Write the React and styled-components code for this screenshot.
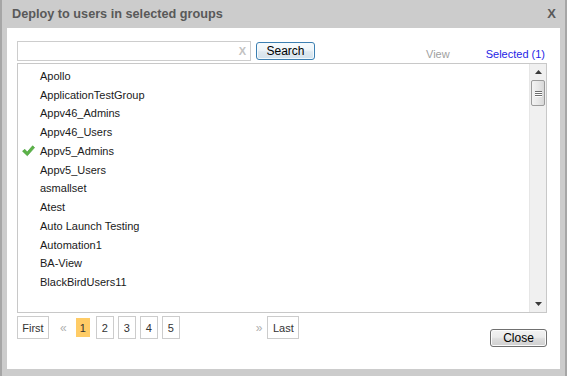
import React from 'react'
import styled, { createGlobalStyle } from 'styled-components'

const groups = [
  'Apollo',
  'ApplicationTestGroup',
  'Appv46_Admins',
  'Appv46_Users',
  'Appv5_Admins',
  'Appv5_Users',
  'asmallset',
  'Atest',
  'Auto Launch Testing',
  'Automation1',
  'BA-View',
  'BlackBirdUsers11',
]

const selected = ['Appv5_Admins']

function CheckMark() {
  return (
    <svg width="13" height="12" viewBox="0 0 13 12">
      <path d="M0.5 6.2 L2.8 4.3 L5.2 7 L10.6 0.8 L12.6 2.6 L5.3 10.8 Z" fill="#5cb247" stroke="#3e9a33" strokeWidth="0.6" strokeLinejoin="round" />
    </svg>
  )
}

function Arrow({ down }) {
  return (
    <svg width="7" height="4" viewBox="0 0 7 4">
      <path d={down ? 'M0 0 H7 L3.5 4 Z' : 'M0 4 H7 L3.5 0 Z'} fill="#3a3a3a" />
    </svg>
  )
}

function App() {
  return (
    <>
      <GlobalStyle />
      <Frame>
        <TitleBar>
          <Title>Deploy to users in selected groups</Title>
          <CloseX>X</CloseX>
        </TitleBar>
        <Body>
          <SearchRow>
            <SearchBox>
              <SearchInput />
              <ClearX>X</ClearX>
            </SearchBox>
            <SearchButton>Search</SearchButton>
            <Tabs>
              <Tab>View</Tab>
              <Tab $active>Selected (1)</Tab>
            </Tabs>
          </SearchRow>

          <ListBox>
            <List>
              {groups.map((g) => (
                <Row key={g}>
                  <CheckCell>{selected.includes(g) ? <CheckMark /> : null}</CheckCell>
                  <RowText>{g}</RowText>
                </Row>
              ))}
            </List>
            <ScrollBar>
              <ScrollArrow><Arrow /></ScrollArrow>
              <Track>
                <Thumb>
                  <Grip />
                  <Grip />
                  <Grip />
                </Thumb>
              </Track>
              <ScrollArrow><Arrow down /></ScrollArrow>
            </ScrollBar>
          </ListBox>

          <Footer>
            <Pager>
              <PageButton $wide>First</PageButton>
              <PageArrow>«</PageArrow>
              <Pages>
                {[1, 2, 3, 4, 5].map((n) => (
                  <PageButton key={n} $active={n === 1}>{n}</PageButton>
                ))}
              </Pages>
              <PageArrow $far>»</PageArrow>
              <PageButton $wide>Last</PageButton>
            </Pager>
            <CloseButton>Close</CloseButton>
          </Footer>
        </Body>
      </Frame>
    </>
  )
}

const GlobalStyle = createGlobalStyle`
  html, body {
    margin: 0;
    padding: 0;
    background: #cccccc;
  }
  * {
    box-sizing: border-box;
  }
`;

let Frame = styled.div`
  width: 567px;
  height: 376px;
  background: #cccccc;
  border-left: 2px solid #a6a6a6;
  border-right: 2px solid #a6a6a6;
  padding: 0 5px 7px 5px;
  display: flex;
  flex-direction: column;
  font-family: "Liberation Sans", Arial, sans-serif;
`;

let TitleBar = styled.div`
  height: 28px;
  display: flex;
  align-items: center;
  justify-content: space-between;
  padding: 0 4px 1px 5px;
  color: #595959;
  font-weight: 700;
`;

let Title = styled.div`
  font-size: 12.7px;
`;

let CloseX = styled.div`
  font-size: 13px;
`;

let Body = styled.div`
  flex: 1;
  background: #ffffff;
  padding: 13px 13px 0 10px;
  display: flex;
  flex-direction: column;
`;

let SearchRow = styled.div`
  display: flex;
  align-items: center;
  height: 20px;
`;

let SearchBox = styled.div`
  position: relative;
  width: 234px;
  height: 20px;
`;

let SearchInput = styled.input`
  width: 100%;
  height: 100%;
  border: 1px solid #cdcdcd;
  outline: none;
  padding: 0 16px 0 3px;
  font-family: inherit;
  font-size: 11px;
`;

let ClearX = styled.span`
  position: absolute;
  right: 5px;
  top: 4px;
  font-size: 11px;
  font-weight: 700;
  color: #c2c2c2;
`;

let SearchButton = styled.button`
  margin-left: 5px;
  width: 59px;
  height: 18px;
  padding: 0;
  border: 1px solid #3c7fb1;
  border-radius: 3px;
  background: linear-gradient(#f7fbfd 0%, #eef5f9 45%, #dfe9f0 55%, #d3e2ec 100%);
  box-shadow: inset 0 0 0 1px #f4fafd;
  font-family: inherit;
  font-size: 12px;
  color: #000;
`;

let Tabs = styled.div`
  margin-left: auto;
  align-self: flex-end;
  margin-bottom: 1px;
  display: flex;
  gap: 36px;
  padding-right: 2px;
`;

let Tab = styled.span`
  font-size: 11px;
  color: ${(p) => (p.$active ? '#2525e6' : '#a0a0a0')};
`;

let ListBox = styled.div`
  margin-top: 2px;
  height: 250px;
  border: 1px solid #c8c8c8;
  display: flex;
`;

let List = styled.div`
  flex: 1;
  padding-top: 2.5px;
`;

let Row = styled.div`
  height: 18.75px;
  display: flex;
  align-items: center;
`;

let CheckCell = styled.div`
  width: 22px;
  padding-left: 4px;
  display: flex;
  align-items: center;
`;

let RowText = styled.span`
  font-size: 11px;
  color: #1a1a1a;
`;

let ScrollBar = styled.div`
  width: 17px;
  background: #f0f0f0;
  border-left: 1px solid #e6e6e6;
  display: flex;
  flex-direction: column;
`;

let ScrollArrow = styled.div`
  height: 16px;
  display: flex;
  align-items: center;
  justify-content: center;
`;

let Track = styled.div`
  flex: 1;
  padding: 0 1px;
`;

let Thumb = styled.div`
  height: 26px;
  border: 1px solid #9b9b9b;
  border-radius: 2px;
  background: linear-gradient(90deg, #f3f3f3 0%, #e8e8e8 50%, #d8d8d8 100%);
  display: flex;
  flex-direction: column;
  align-items: center;
  justify-content: center;
  gap: 1px;
`;

let Grip = styled.div`
  width: 7px;
  height: 1px;
  background: #6d6d6d;
  box-shadow: 0 1px 0 #ffffff;
`;

let Footer = styled.div`
  margin-top: 3px;
  display: flex;
  justify-content: space-between;
  align-items: flex-start;
`;

let Pager = styled.div`
  display: flex;
  align-items: center;
`;

let Pages = styled.div`
  display: flex;
  gap: 4px;
  margin-left: 7px;
`;

let PageButton = styled.div`
  width: ${(p) => (p.$wide ? '32px' : '18px')};
  height: 23px;
  display: flex;
  align-items: center;
  justify-content: center;
  border: ${(p) => (p.$active ? '2px solid #ffffff' : '1px solid #cccccc')};
  background: ${(p) => (p.$active ? '#ffcc66' : '#ffffff')};
  background-clip: padding-box;
  font-size: 11px;
  color: #333333;
`;

let PageArrow = styled.span`
  margin-left: ${(p) => (p.$far ? '76px' : '11px')};
  margin-right: ${(p) => (p.$far ? '5px' : '0')};
  font-size: 12px;
  color: #b0b0b0;
`;

let CloseButton = styled.button`
  margin-top: 13px;
  width: 57px;
  height: 18px;
  padding: 0;
  border: 1px solid #707070;
  border-radius: 3px;
  background: linear-gradient(#f2f2f2 0%, #ebebeb 45%, #dddddd 55%, #cfcfcf 100%);
  box-shadow: inset 0 0 0 1px #fbfbfb;
  font-family: inherit;
  font-size: 12px;
  color: #000;
`;

export default App
